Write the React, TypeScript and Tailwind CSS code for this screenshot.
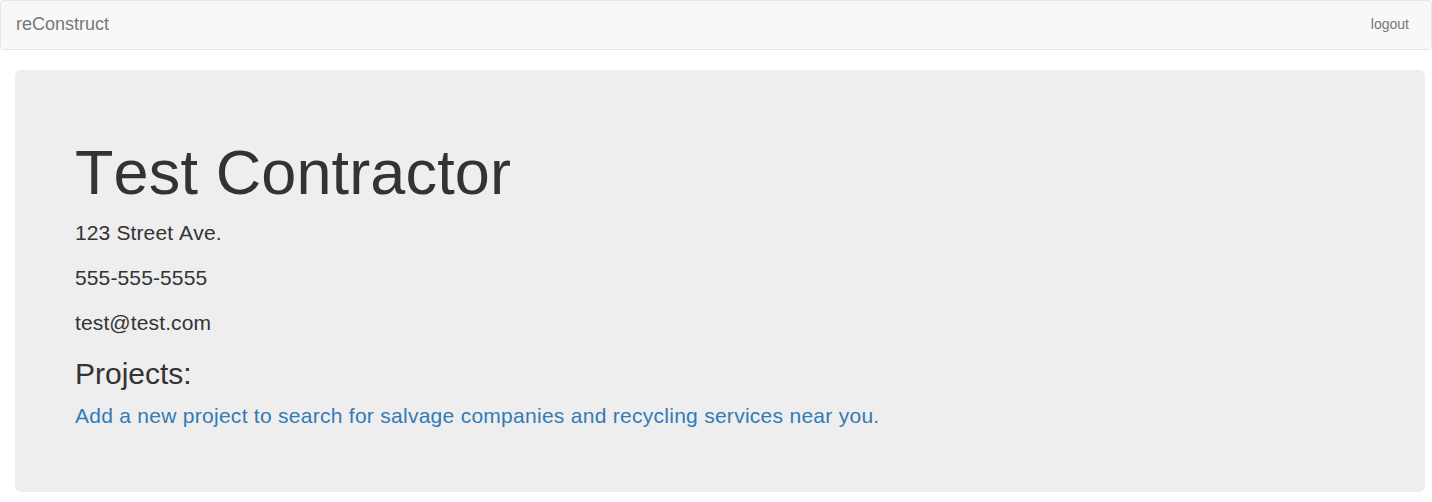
import React from "react";

export default function App() {
  return (
    <div
      className="min-h-[502px] bg-white text-[#333] text-[14px] [font-kerning:none]"
      style={{ fontFamily: '"Liberation Sans", Arial, Helvetica, sans-serif' }}
    >
      <nav className="h-[50px] bg-[#f8f8f8] border border-[#e7e7e7] rounded-[4px] flex items-center justify-between">
        <a className="pl-[15px] text-[18px] leading-[20px] text-[#777] pb-[2px]">reConstruct</a>
        <a className="pr-[22px] text-[14px] leading-[20px] text-[#777] pb-[2px]">logout</a>
      </nav>
      <div className="mt-[20px] ml-[15px] mr-[7px] h-[422px] bg-[#eee] rounded-[6px] px-[60px] pt-[68px] tracking-[0.009em]">
        <h1 className="text-[63px] leading-[69px] font-normal m-0 tracking-[0.002em]">Test Contractor</h1>
        <p className="mt-[11px] text-[21px] leading-[30px]">123 Street Ave.</p>
        <p className="mt-[15px] text-[21px] leading-[30px]">555-555-5555</p>
        <p className="mt-[15px] text-[21px] leading-[30px]">test@test.com</p>
        <h2 className="mt-[19px] text-[30px] leading-[33px] font-normal tracking-normal">Projects:</h2>
        <p className="mt-[11px] text-[21px] leading-[30px] tracking-[0.013em]">
          <a className="text-[#337ab7]">
            Add a new project to search for salvage companies and recycling services near you.
          </a>
        </p>
      </div>
    </div>
  );
}
